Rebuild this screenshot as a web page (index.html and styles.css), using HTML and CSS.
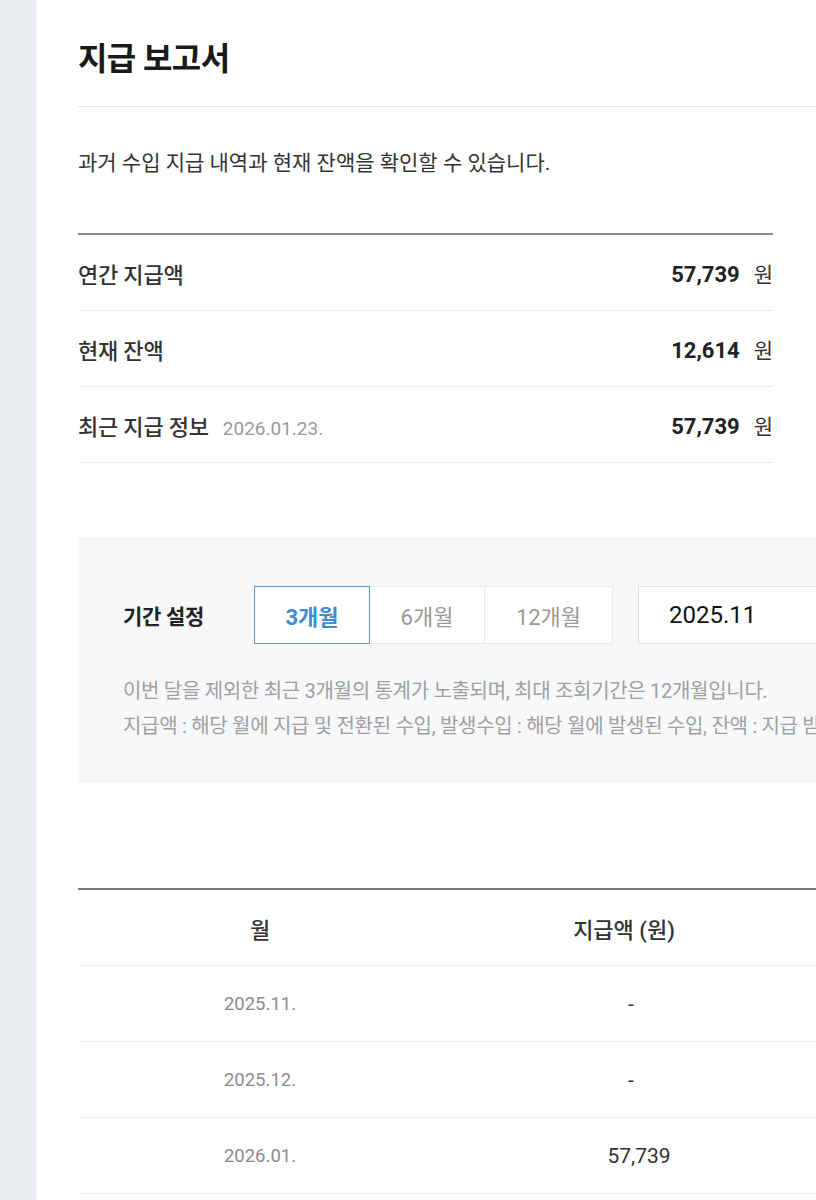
FILE: index.html
```html
<!DOCTYPE html>
<html lang="ko">
<head>
<meta charset="utf-8">
<title>지급 보고서</title>
<link rel="stylesheet" href="styles.css">
</head>
<body>
<div class="layout">
  <aside class="sidebar"></aside>
  <main class="main">
    <h1 class="title">지급 보고서</h1>
    <p class="desc">과거 수입 지급 내역과 현재 잔액을 확인할 수 있습니다.</p>

    <section class="summary">
      <div class="srow">
        <div class="slabel">연간 지급액</div>
        <div class="svalue"><b>57,739</b><span class="won">원</span></div>
      </div>
      <div class="srow">
        <div class="slabel">현재 잔액</div>
        <div class="svalue"><b>12,614</b><span class="won">원</span></div>
      </div>
      <div class="srow">
        <div class="slabel">최근 지급 정보<span class="sdate">2026.01.23.</span></div>
        <div class="svalue"><b>57,739</b><span class="won">원</span></div>
      </div>
    </section>

    <section class="filter">
      <div class="frow">
        <div class="flabel">기간 설정</div>
        <div class="seg">
          <button class="segbtn active">3개월</button>
          <button class="segbtn six">6개월</button>
          <button class="segbtn twelve">12개월</button>
        </div>
        <div class="dateinput">2025.11</div>
      </div>
      <p class="note">이번 달을 제외한 최근 3개월의 통계가 노출되며, 최대 조회기간은 12개월입니다.</p>
      <p class="note">지급액 : 해당 월에 지급 및 전환된 수입, 발생수입 : 해당 월에 발생된 수입, 잔액 : 지급 받을 수 있는 수입</p>
    </section>

    <table class="report">
      <thead>
        <tr><th>월</th><th>지급액 (원)</th><th>발생수입 (원)</th></tr>
      </thead>
      <tbody>
        <tr><td class="month">2025.11.</td><td class="amt">-</td><td>-</td></tr>
        <tr><td class="month">2025.12.</td><td class="amt">-</td><td>-</td></tr>
        <tr><td class="month">2026.01.</td><td class="amt num">57,739</td><td>-</td></tr>
      </tbody>
    </table>
  </main>
</div>
</body>
</html>
```

FILE: styles.css
```css
html, body {
  margin: 0;
  padding: 0;
  background: #ffffff;
  overflow: hidden;
}
body {
  font-family: Roboto, "Noto Sans CJK KR", sans-serif;
  color: #222;
  width: 816px;
  height: 1200px;
}
.layout {
  display: flex;
  min-height: 1200px;
  width: 1300px;
}
.sidebar {
  width: 35px;
  flex: 0 0 35px;
  background: #e9ecf0;
  border-right: 1px solid #e2e5e9;
}
.main {
  flex: 1;
  padding: 0 0 0 42px;
}
.title {
  margin: 0;
  padding: 39px 0 27px;
  font-size: 32px;
  font-weight: 700;
  letter-spacing: -0.6px;
  line-height: 40px;
  color: #1a1a1a;
  border-bottom: 1px solid #e6e6e6;
}
.desc {
  margin: 0;
  padding: 41px 0 0;
  font-size: 21px;
  line-height: 30px;
  letter-spacing: 0;
  color: #333;
}
.summary {
  width: 695px;
  margin-top: 55px;
  border-top: 2px solid #888b8f;
}
.srow {
  display: flex;
  justify-content: space-between;
  align-items: center;
  height: 75px;
  border-bottom: 1px solid #ececec;
}
.slabel {
  font-size: 22px;
  font-weight: 500;
  color: #333;
  letter-spacing: -0.2px;
}
.sdate {
  margin-left: 14px;
  font-size: 19px;
  font-weight: 400;
  color: #999;
  letter-spacing: 0;
}
.svalue {
  font-size: 22px;
  color: #222;
}
.svalue b {
  font-weight: 700;
}
.won {
  margin-left: 14px;
  font-size: 21px;
  font-weight: 400;
  color: #333;
}
.filter {
  margin-top: 75px;
  background: #f7f8fa;
  border-top: 1px solid #ebedf0;
  border-bottom: 1px solid #ebedf0;
  padding: 47px 0 37px 45px;
}
.frow {
  display: flex;
  align-items: center;
  margin-bottom: 30px;
}
.flabel {
  width: 131px;
  font-size: 21px;
  font-weight: 700;
  color: #222;
  letter-spacing: -0.3px;
}
.seg {
  display: flex;
}
.segbtn {
  height: 58px;
  padding: 0;
  margin: 0;
  background: #fff;
  border: 1px solid #e8e9ec;
  border-left: none;
  font-family: Roboto, "Noto Sans CJK KR", sans-serif;
  font-size: 22px;
  color: #999;
  cursor: pointer;
}
.segbtn.active {
  border: 1px solid #5b9bd1;
  color: #3f8cd0;
  font-weight: 700;
  width: 116px;
}
.segbtn.six {
  width: 115px;
}
.segbtn.twelve {
  width: 128px;
}
.dateinput {
  margin-left: 25px;
  width: 300px;
  height: 56px;
  background: #fff;
  border: 1px solid #dedfe2;
  display: flex;
  align-items: center;
  padding-left: 30px;
  font-size: 24px;
  color: #111;
}
.note {
  margin: 0;
  font-size: 20px;
  line-height: 35px;
  color: #a0a0a0;
  letter-spacing: -0.3px;
  white-space: nowrap;
}
.report {
  margin-top: 106px;
  border-collapse: collapse;
  border-top: 2px solid #777a7e;
  table-layout: fixed;
  width: 1092px;
}
.report th, .report td {
  width: 364px;
  text-align: center;
  height: 75px;
  padding: 0;
  border-bottom: 1px solid #ececec;
}
.report th {
  font-size: 22px;
  font-weight: 500;
  color: #333;
}
.report td {
  font-size: 21px;
  color: #333;
}
.report td.amt {
  padding-left: 14px;
}
.report td.amt.num {
  padding-left: 30px;
}
.report td.month {
  font-size: 18.5px;
  color: #8c8c8c;
}
```
